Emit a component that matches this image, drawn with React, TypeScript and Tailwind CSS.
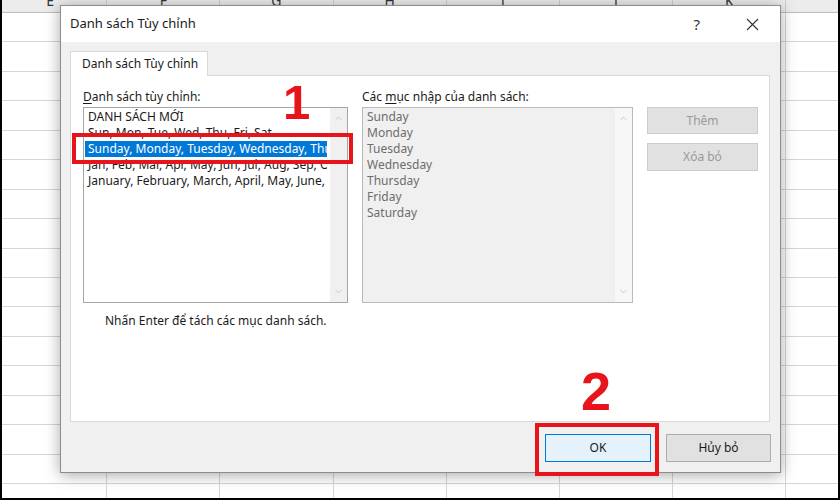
import { ChevronUp, ChevronDown } from 'lucide-react';

const columns = ['E', 'F', 'G', 'H', 'I', 'J', 'K', 'L'];
const rows = Array.from({ length: 17 }, (_, i) => i);

const leftItems = [
  'DANH SÁCH MỚI',
  'Sun, Mon, Tue, Wed, Thu, Fri, Sat',
  'Sunday, Monday, Tuesday, Wednesday, Thursday, Friday, Saturday',
  'Jan, Feb, Mar, Apr, May, Jun, Jul, Aug, Sep, Oct, Nov, Dec',
  'January, February, March, April, May, June, July, August',
];

const entries = ['Sunday', 'Monday', 'Tuesday', 'Wednesday', 'Thursday', 'Friday', 'Saturday'];

const Scrollbar = ({ light }: { light?: boolean }) => (
  <div
    className={`w-[17px] h-full flex flex-col items-center justify-between py-[5px] ${
      light ? 'bg-[#f7f7f7]' : 'bg-[#f0f0f0]'
    }`}
  >
    <ChevronUp size={11} strokeWidth={1.5} className="text-[#b5b5b5]" />
    <ChevronDown size={11} strokeWidth={1.5} className="text-[#b5b5b5]" />
  </div>
);

const App = () => {
  return (
    <div
      className="relative w-[840px] h-[500px] overflow-hidden bg-white border-l-2 border-r-2 border-b-2 border-black"
      style={{ fontFamily: '"Noto Sans", "DejaVu Sans", sans-serif' }}
    >
      {/* Spreadsheet behind the dialog */}
      <div className="ml-[-8px]">
        <div className="flex h-[13px] bg-[#ececec] border-b border-[#bdbdbd] overflow-hidden">
          {columns.map((c) => (
            <div
              key={c}
              className="w-[113.2px] shrink-0 border-r border-[#cfcfcf] flex justify-center overflow-hidden"
            >
              <span className="text-[14px] leading-[20px] mt-[-9px] text-[#333]">{c}</span>
            </div>
          ))}
        </div>
        {rows.map((r) => (
          <div key={r} className="flex h-[29.44px] border-b border-[#d6d6d6]">
            {columns.map((c) => (
              <div key={c} className="w-[113.2px] shrink-0 border-r border-[#d6d6d6]" />
            ))}
          </div>
        ))}
      </div>

      {/* Dialog */}
      <div className="absolute left-[58px] top-[5px] w-[721px] h-[468px] flex flex-col bg-[#f0f0f0] border border-[#8c8c8c] shadow-[0_2px_14px_rgba(0,0,0,0.35)]">
        {/* Title bar */}
        <div className="h-[36px] bg-white flex items-center pl-[9px] pr-[21px] shrink-0">
          <span className="text-[13px] text-[#1a1a1a] whitespace-nowrap">Danh sách Tùy chỉnh</span>
          <span className="ml-auto text-[15px] text-[#333] mr-[46px]">?</span>
          <svg width="13" height="13" viewBox="0 0 13 13" className="text-[#333]">
            <path d="M1 1L12 12M12 1L1 12" stroke="currentColor" strokeWidth="1.1" />
          </svg>
        </div>

        {/* Body */}
        <div className="flex-1 flex flex-col pl-[9px] pr-[10px] pt-[9px]">
          <div className="relative z-10 -mb-px w-[138px] h-[25px] bg-white border border-[#d9d9d9] border-b-0 flex items-center pl-[11px]">
            <span className="text-[12px] text-[#1a1a1a] whitespace-nowrap">Danh sách Tùy chỉnh</span>
          </div>

          <div className="h-[347px] bg-white border border-[#d9d9d9] pl-[12px] pt-[13px] flex flex-col">
            <div className="flex text-[12px] leading-[16px]">
              {/* Left column */}
              <div className="w-[265px] flex flex-col">
                <div className="h-[18px] text-[#1a1a1a] whitespace-nowrap">
                  <span className="underline underline-offset-2">D</span>anh sách tùy chỉnh:
                </div>
                <div className="h-[196px] border border-[#a5a5a5] flex">
                  <div className="flex-1 min-w-0 pt-[1px] pl-[1px] pr-[3px]">
                    {leftItems.map((item, i) => (
                      <div
                        key={item}
                        className={`h-[16px] px-[3px] whitespace-nowrap overflow-hidden ${
                          i === 2 ? 'bg-[#0078d7] text-white' : 'text-[#1a1a1a]'
                        }`}
                      >
                        {item}
                      </div>
                    ))}
                  </div>
                  <Scrollbar />
                </div>
              </div>

              {/* Middle column */}
              <div className="w-[271px] ml-[14px] flex flex-col">
                <div className="h-[18px] text-[#1a1a1a] whitespace-nowrap">
                  Các <span className="underline underline-offset-2">m</span>ục nhập của danh sách:
                </div>
                <div className="h-[196px] border border-[#b9b9b9] bg-[#f0f0f0] flex">
                  <div className="flex-1 pt-[1px] pl-[4px] text-[#6d6d6d]">
                    {entries.map((e) => (
                      <div key={e} className="h-[16px]">
                        {e}
                      </div>
                    ))}
                  </div>
                  <Scrollbar light />
                </div>
              </div>

              {/* Buttons */}
              <div className="w-[111px] ml-[14px] pt-[18px] flex flex-col gap-[9px]">
                <button className="h-[27px] bg-[#e1e1e1] border border-[#cccccc] text-[#9a9a9a]">Thêm</button>
                <button className="h-[28px] bg-[#e1e1e1] border border-[#cccccc] text-[#9a9a9a]">Xóa bỏ</button>
              </div>
            </div>

            <div className="mt-[10px] ml-[22px] text-[12px] leading-[16px] text-[#1a1a1a]">
              Nhấn Enter để tách các mục danh sách.
            </div>
          </div>

          {/* Footer */}
          <div className="flex justify-end gap-[15px] pt-[12px] mr-[-1px] text-[12px]">
            <button className="w-[106px] h-[28px] bg-[#e5f1fb] border border-[#0078d7] text-[#1a1a1a]">OK</button>
            <button className="w-[105px] h-[28px] bg-[#e1e1e1] border border-[#adadad] text-[#1a1a1a]">Hủy bỏ</button>
          </div>
        </div>
      </div>

      {/* Annotations */}
      <div className="absolute left-[70px] top-[133px] w-[281px] h-[31px] border-[4px] border-[#e8141b]" />
      <div
        className="absolute left-[281px] top-[72px] text-[49px] leading-[60px] font-bold text-[#e8141b]"
        style={{ fontFamily: '"Liberation Sans", Arial, sans-serif' }}
      >
        1
      </div>
      <div className="absolute left-[533px] top-[423px] w-[124px] h-[53px] border-[4px] border-[#e8141b]" />
      <div
        className="absolute left-[579px] top-[358px] text-[54px] leading-[66px] font-bold text-[#e8141b]"
        style={{ fontFamily: '"Liberation Sans", Arial, sans-serif' }}
      >
        2
      </div>
    </div>
  );
};

export default App;
